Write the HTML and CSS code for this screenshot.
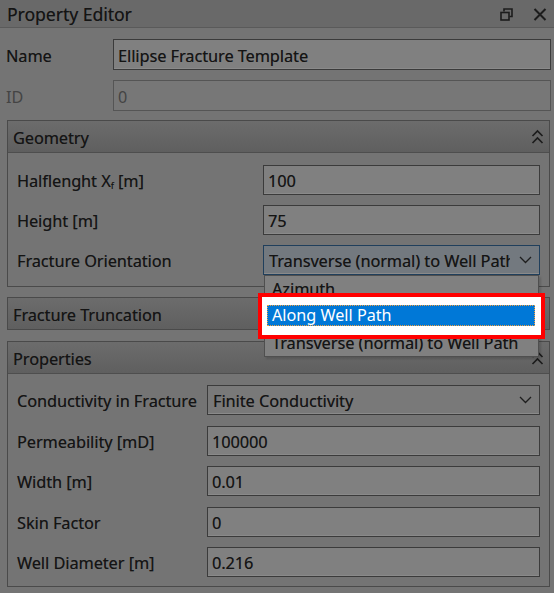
FILE: index.html
```html
<!DOCTYPE html>
<html>
<head>
<meta charset="utf-8">
<link rel="stylesheet" href="styles.css">
</head>
<body>
<div class="panel">
  <div class="titlebar">
    <span class="title">Property Editor</span>
    <div class="tb-icons">
      <svg class="ic-restore" width="13" height="13" viewBox="0 0 13 13"><path d="M4 3.5V1h8v7.5H9.5" fill="none" stroke="#1c1c1c" stroke-width="1.6"/><rect x="1" y="4.5" width="8" height="7.5" fill="none" stroke="#1c1c1c" stroke-width="1.6"/></svg>
      <svg class="ic-close" width="14" height="13" viewBox="0 0 14 13"><path d="M1.5 1L12.5 12M12.5 1L1.5 12" stroke="#1c1c1c" stroke-width="2"/></svg>
    </div>
  </div>

  <div class="top-form">
    <div class="row">
      <span class="label">Name</span>
      <div class="field">Ellipse Fracture Template</div>
    </div>
    <div class="row disabled">
      <span class="label">ID</span>
      <div class="field">0</div>
    </div>
  </div>

  <section class="group">
    <div class="group-head">
      <span class="head-text">Geometry</span>
      <svg class="collapse" width="13" height="16" viewBox="0 0 13 16"><path d="M1.5 7L6.5 2L11.5 7M1.5 14L6.5 9L11.5 14" fill="none" stroke="#1c1c1c" stroke-width="1.7"/></svg>
    </div>
    <div class="group-body geo">
      <span class="label">Halflenght X<sub>f</sub> [m]</span>
      <div class="field">100</div>
      <span class="label">Height [m]</span>
      <div class="field">75</div>
      <span class="label">Fracture Orientation</span>
      <div class="field combo focus">
        <span class="combo-text">Transverse (normal) to Well Path</span>
        <svg class="chev" width="13" height="8" viewBox="0 0 13 8"><path d="M1 1L6.5 6.5L12 1" fill="none" stroke="#1e1e1e" stroke-width="1.3"/></svg>
      </div>
    </div>
  </section>

  <section class="group collapsed">
    <div class="group-head">
      <span class="head-text">Fracture Truncation</span>
    </div>
  </section>

  <section class="group">
    <div class="group-head">
      <span class="head-text">Properties</span>
      <svg class="collapse" width="13" height="16" viewBox="0 0 13 16"><path d="M1.5 7L6.5 2L11.5 7M1.5 14L6.5 9L11.5 14" fill="none" stroke="#1c1c1c" stroke-width="1.7"/></svg>
    </div>
    <div class="group-body props">
      <span class="label">Conductivity in Fracture</span>
      <div class="field combo">
        <span class="combo-text">Finite Conductivity</span>
        <svg class="chev" width="13" height="8" viewBox="0 0 13 8"><path d="M1 1L6.5 6.5L12 1" fill="none" stroke="#1e1e1e" stroke-width="1.3"/></svg>
      </div>
      <span class="label">Permeability [mD]</span>
      <div class="field">100000</div>
      <span class="label">Width [m]</span>
      <div class="field">0.01</div>
      <span class="label">Skin Factor</span>
      <div class="field">0</div>
      <span class="label">Well Diameter [m]</span>
      <div class="field">0.216</div>
    </div>
  </section>

  <div class="popup">
    <div class="item">Azimuth</div>
    <div class="item">Along Well Path</div>
    <div class="item">Transverse (normal) to Well Path</div>
  </div>

  <div class="highlight">
    <div class="selected">Along Well Path</div>
  </div>
</div>
</body>
</html>
```

FILE: styles.css
```css
* { box-sizing: border-box; }

html, body {
  margin: 0;
  padding: 0;
}

body {
  width: 554px;
  height: 593px;
  overflow: hidden;
  background: #747474;
  font-family: "Noto Sans", "Open Sans", sans-serif;
  font-size: 16.2px;
  color: #141414;
  text-shadow: 0.25px 0 0 rgba(20,20,20,0.6);
}

.panel {
  position: relative;
  width: 554px;
  height: 593px;
}

.titlebar {
  height: 28px;
  background: #696969;
  border-bottom: 1px solid #5a5a5a;
  display: flex;
  align-items: center;
  padding: 0 7px 0 7px;
}

.title {
  font-size: 17.5px;
  flex: 1;
  line-height: 1;
  padding-top: 3px;
}

.tb-icons {
  display: flex;
  align-items: center;
  gap: 20px;
  margin-top: 1px;
}

.top-form {
  padding: 11px 3px 0 6px;
  display: flex;
  flex-direction: column;
  gap: 10px;
}

.row {
  display: grid;
  grid-template-columns: 107px 1fr;
  align-items: center;
  height: 31px;
}

.field {
  height: 100%;
  border: 1px solid #3b3b3b;
  background: #808080;
  box-shadow: inset 0 -1px 0 #8a8a8a;
  display: flex;
  align-items: center;
  padding-left: 4px;
  white-space: nowrap;
  overflow: hidden;
}

.row.disabled .label,
.row.disabled .field {
  color: #444444;
  text-shadow: none;
}

.row.disabled .field {
  background: #777777;
  border-color: #555555;
  box-shadow: none;
}

.group {
  margin: 9px 4px 0 7px;
  border: 1px solid #4a4a4a;
}

.group + .group {
  margin-top: 10px;
}

.group.collapsed + .group {
  margin-top: 11px;
}

.group-head {
  height: 32px;
  background: linear-gradient(#6c6c6c, #5f5f5f);
  border-bottom: 1px solid #4e4e4e;
  display: flex;
  align-items: center;
  justify-content: space-between;
  padding: 0 5px 0 5px;
}

.head-text {
  padding-top: 3px;
}

.group.collapsed .group-head {
  height: 31px;
  border-bottom: none;
}

.collapse {
  margin-top: 1px;
}

.group-body {
  display: grid;
  align-items: center;
  padding: 12px 9px 11px 9px;
  row-gap: 10px;
}

.group-body.geo {
  grid-template-columns: 246px 1fr;
  grid-auto-rows: 30px;
}

.group-body.props {
  grid-template-columns: 190px 1fr;
  grid-auto-rows: 30px;
  row-gap: 10.5px;
  padding-top: 11px;
  padding-bottom: 9px;
}

.label {
  white-space: nowrap;
  padding-top: 2px;
}

.label sub {
  font-size: 9px;
  vertical-align: -2px;
}

.field {
  padding-top: 2px;
}

.combo {
  padding-left: 5px;
  padding-right: 7px;
  background: #797979;
}

.combo.focus {
  border-color: #203f5c;
  background: #73797f;
}

.combo-text {
  flex: 1;
  overflow: hidden;
  white-space: nowrap;
  margin-right: 9px;
}

.chev {
  flex: none;
  margin-top: -2px;
}

.popup {
  position: absolute;
  left: 264px;
  top: 275px;
  width: 275px;
  height: 82px;
  border: 1px solid #4f4f4f;
  background: #808080;
  box-shadow: 2px 2px 2px rgba(0,0,0,0.15);
}

.item {
  height: 27px;
  line-height: 27px;
  padding-left: 7px;
  white-space: nowrap;
}

.highlight {
  position: absolute;
  left: 258px;
  top: 293px;
  width: 287px;
  height: 46px;
  border: 4px solid #ff0000;
  background: #ffffff;
}

.selected {
  position: absolute;
  left: 5px;
  top: 8px;
  width: 268px;
  height: 21px;
  background: #0078d7;
  border: 1px dotted #f0a040;
  color: #ffffff;
  text-shadow: none;
  line-height: 19px;
  padding-left: 4px;
  white-space: nowrap;
}
```
